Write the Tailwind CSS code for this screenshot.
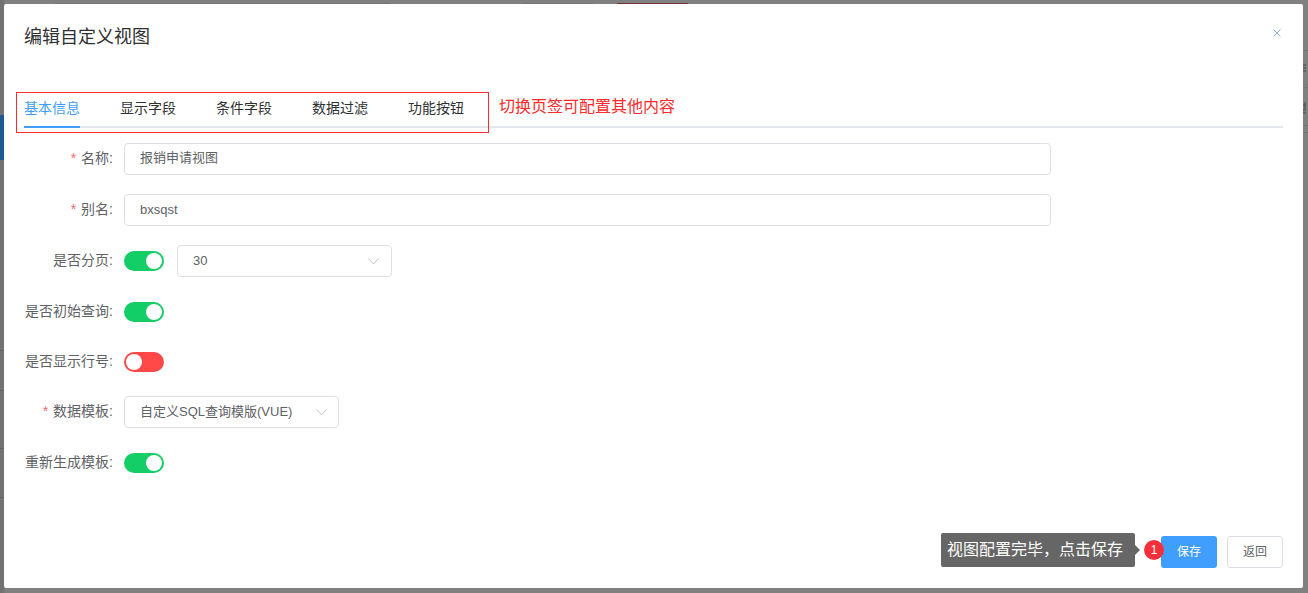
<!DOCTYPE html>
<html lang="zh">
<head>
    <meta charset="UTF-8">
    <title>编辑自定义视图</title>
    <script src="https://cdn.jsdelivr.net/npm/@tailwindcss/browser@4"></script>
</head>
<body class="relative bg-[#808080] h-[593px] w-[1308px] overflow-hidden font-['Liberation_Sans','Noto_Sans_CJK_SC',sans-serif]">
    <!-- Page behind the mask -->
    <div class="absolute left-0 top-0 w-[4px] h-[593px] bg-[#727272]"></div>
    <div class="absolute left-0 top-[115px] w-[4px] h-[45px] bg-[#1f5a94]"></div>
    <div class="absolute left-0 top-[350px] w-[4px] h-px bg-[#666666]"></div>
    <div class="absolute left-0 top-[390px] w-[4px] h-px bg-[#666666]"></div>
    <div class="absolute left-0 top-[448px] w-[4px] h-px bg-[#666666]"></div>
    <div class="absolute left-0 top-[497px] w-[4px] h-px bg-[#666666]"></div>
    <div class="absolute right-0 top-[50px] w-[5px] h-px bg-[#737373]"></div>
    <div class="absolute right-0 top-[87px] w-[5px] h-px bg-[#737373]"></div>
    <div class="absolute right-0 top-[125px] w-[5px] h-px bg-[#737373]"></div>
    <div class="absolute right-0 top-[132px] w-[5px] h-px bg-[#737373]"></div>
    <svg class="absolute left-[1303px] top-[64px]" width="4" height="52" viewBox="0 0 4 52" fill="none" stroke="#4a4a4a" stroke-width="1"><path d="M0 1H3M0 4H3M0 7H3M0 41H2M2 38V45M0 46H3M0 49H3"/></svg>
    <div class="absolute left-[55px] top-[3px] w-[335px] h-px bg-[#737373]"></div>
    <div class="absolute left-[523px] top-[3px] w-[70px] h-px bg-[#737373]"></div>
    <div class="absolute left-[617px] top-[3px] w-[71px] h-px bg-[#7a3030]"></div>

    <div class="relative pt-[4px] pl-[4px]">
        <!-- Dialog -->
        <div class="relative w-[1299px] h-[584px] bg-white rounded-[2px] flex flex-col">
            <div class="h-[66px] pl-[20px] pt-[21px] text-[18px] leading-[24px] text-[#303133]">编辑自定义视图</div>
            <svg class="absolute left-[1269px] top-[25px]" width="8" height="8" viewBox="0 0 8 8" fill="none" stroke="#8fb0d0" stroke-width="1"><path d="M0.5 0.5L7.5 7.5M7.5 0.5L0.5 7.5"/></svg>

            <!-- Tabs -->
            <div class="ml-[20px] mr-[20px] mt-[15px] h-[43px] border-b-2 border-[#e4e7ed] flex text-[14px] text-[#303133]">
                <div class="relative w-[56px] h-[43px] leading-[46px] text-[#409eff] whitespace-nowrap border-b-2 border-[#409eff]">基本信息</div>
                <div class="w-[56px] ml-[40px] leading-[46px] whitespace-nowrap">显示字段</div>
                <div class="w-[56px] ml-[40px] leading-[46px] whitespace-nowrap">条件字段</div>
                <div class="w-[56px] ml-[40px] leading-[46px] whitespace-nowrap">数据过滤</div>
                <div class="w-[56px] ml-[40px] leading-[46px] whitespace-nowrap">功能按钮</div>
            </div>

            <!-- Annotation over the tabs -->
            <div class="absolute left-[12px] top-[88px] w-[473px] h-[41px] border border-[#ff2a2a]"></div>
            <div class="absolute left-[495px] top-[92px] text-[16px] leading-[22px] text-[#ff2a2a]">切换页签可配置其他内容</div>

            <!-- Form -->
            <div class="mt-[15px] flex flex-col text-[13px] text-[#606266]">
                <div class="flex items-center h-[32px]">
                    <label class="w-[109px] text-right text-[14px] pb-[2px]"><span class="text-[#f56c6c] mr-[5px]">*</span>名称:</label>
                    <div class="ml-[11px] w-[927px] h-[32px] border border-[#dcdfe6] rounded-[4px] pl-[15px] leading-[28px]">报销申请视图</div>
                </div>
                <div class="flex items-center h-[32px] mt-[19px]">
                    <label class="w-[109px] text-right text-[14px] pb-[2px]"><span class="text-[#f56c6c] mr-[5px]">*</span>别名:</label>
                    <div class="ml-[11px] w-[927px] h-[32px] border border-[#dcdfe6] rounded-[4px] pl-[15px] leading-[30px]">bxsqst</div>
                </div>
                <div class="flex items-center h-[32px] mt-[19px]">
                    <label class="w-[109px] text-right text-[14px] pb-[2px]">是否分页:</label>
                    <div class="ml-[11px] w-[40px] h-[20px] rounded-full bg-[#13ce66] flex justify-end items-center pr-[2px]"><span class="w-[16px] h-[16px] rounded-full bg-white"></span></div>
                    <div class="ml-[13px] w-[215px] h-[32px] border border-[#dcdfe6] rounded-[4px] pl-[15px] pr-[12px] flex items-center justify-between">
                        <span>30</span>
                        <svg width="11" height="7" viewBox="0 0 11 7" fill="none" stroke="#c0c4cc" stroke-width="1"><path d="M0.5 0.5L5.5 6L10.5 0.5"/></svg>
                    </div>
                </div>
                <div class="flex items-center h-[20px] mt-[25px]">
                    <label class="w-[109px] text-right text-[14px] whitespace-nowrap pb-[2px]">是否初始查询:</label>
                    <div class="ml-[11px] w-[40px] h-[20px] rounded-full bg-[#13ce66] flex justify-end items-center pr-[2px]"><span class="w-[16px] h-[16px] rounded-full bg-white"></span></div>
                </div>
                <div class="flex items-center h-[20px] mt-[30px]">
                    <label class="w-[109px] text-right text-[14px] whitespace-nowrap pb-[2px]">是否显示行号:</label>
                    <div class="ml-[11px] w-[40px] h-[20px] rounded-full bg-[#ff4949] flex items-center pl-[2px]"><span class="w-[16px] h-[16px] rounded-full bg-white"></span></div>
                </div>
                <div class="flex items-center h-[32px] mt-[24px]">
                    <label class="w-[109px] text-right text-[14px] pb-[2px]"><span class="text-[#f56c6c] mr-[5px]">*</span>数据模板:</label>
                    <div class="ml-[11px] w-[215px] h-[32px] border border-[#dcdfe6] rounded-[4px] pl-[15px] pr-[11px] flex items-center justify-between">
                        <span class="whitespace-nowrap">自定义SQL查询模版(VUE)</span>
                        <svg width="11" height="7" viewBox="0 0 11 7" fill="none" stroke="#c0c4cc" stroke-width="1"><path d="M0.5 0.5L5.5 6L10.5 0.5"/></svg>
                    </div>
                </div>
                <div class="flex items-center h-[20px] mt-[25px]">
                    <label class="w-[109px] text-right text-[14px] whitespace-nowrap pb-[2px]">重新生成模板:</label>
                    <div class="ml-[11px] w-[40px] h-[20px] rounded-full bg-[#13ce66] flex justify-end items-center pr-[2px]"><span class="w-[16px] h-[16px] rounded-full bg-white"></span></div>
                </div>
            </div>

            <!-- Footer buttons -->
            <div class="absolute left-[1157px] top-[532px] flex gap-[10px] text-[12px]">
                <div class="w-[56px] h-[32px] rounded-[3px] bg-[#409eff] text-white text-center leading-[32px]">保存</div>
                <div class="w-[56px] h-[32px] rounded-[3px] border border-[#dcdfe6] text-[#606266] text-center leading-[30px]">返回</div>
            </div>

            <!-- Step tooltip -->
            <div class="absolute left-[937px] top-[529px] flex items-center">
                <div class="w-[194px] h-[34px] rounded-[2px] bg-[#666666] text-white text-[16px] leading-[34px] pl-[6px] whitespace-nowrap">视图配置完毕&#xFF0C;点击保存</div>
                <div class="w-0 h-0 border-y-[5px] border-y-transparent border-l-[5px] border-l-[#666666]"></div>
            </div>
            <div class="absolute left-[1140px] top-[536px] w-[20px] h-[20px] rounded-full bg-[#f5303a] text-white text-[12px] leading-[20px] text-center">1</div>
        </div>
    </div>
</body>
</html>
